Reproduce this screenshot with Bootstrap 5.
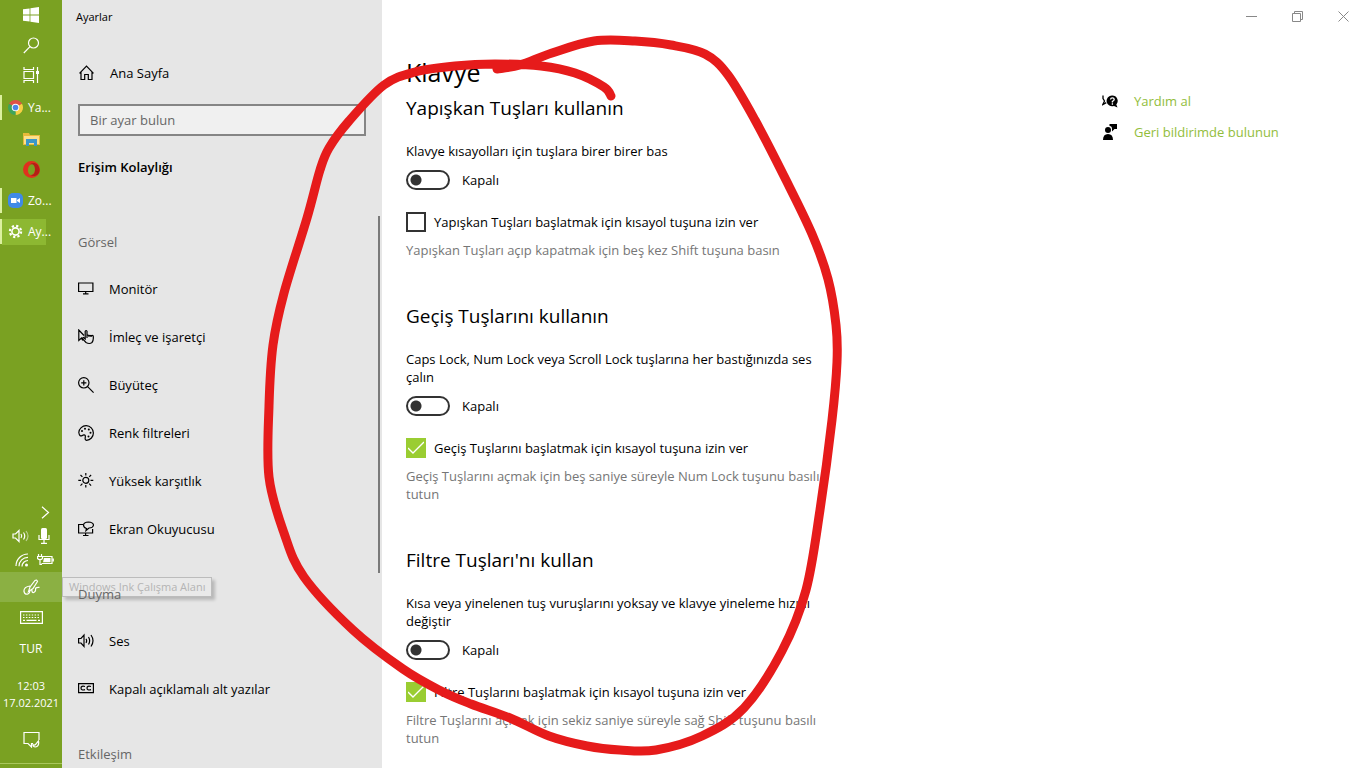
<!DOCTYPE html>
<html lang="tr">
<head>
<meta charset="utf-8">
<meta name="viewport" content="width=device-width, initial-scale=1">
<title>Ayarlar</title>
<link href="https://cdn.jsdelivr.net/npm/bootstrap@5.3.0/dist/css/bootstrap.min.css" rel="stylesheet">
<style>
  body { font-family: "Open Sans", "Noto Sans", sans-serif; font-size: 13px; line-height: 18px; color: #000; background: #fff; }
  button { font: inherit; color: inherit; background: none; border: 0; padding: 0; }
  svg { display: block; flex: none; }
  .line-art { fill: none; stroke: currentColor; stroke-width: 1.2; }

  .taskbar { width: 62px; background: #7aa122; color: #fff; font-size: 12px; line-height: 17px; }
  .tb-pin { height: 30px; }
  .tb-apps { margin-top: 2px; }
  .tb-app { height: 31px; gap: 5px; }
  .tb-app.running { padding-left: 6px; border-left: 2px solid transparent; border-image: linear-gradient(transparent 4px, #dcf0a0 4px, #dcf0a0 27px, transparent 27px) 1; }
  .tb-app.current { background: linear-gradient(#8db832, #8db832) 0 3px / 44px 26px no-repeat; }
  .tray-row { height: 24px; gap: 8px; padding-right: 8px; }
  .tray-btn { height: 30px; }
  .tray-btn.hot { background: #8bb043; }
  .tray-lang { height: 32px; }
  .tray-clock { margin: 13px 0; font-size: 11px; }
  .tray-edge { border-bottom: 1px solid #a9c75c; height: 10px; margin-bottom: 4px; }
  .ink-tip { left: 62px; top: 5px; padding: 0 6px; font-size: 11px; line-height: 18px; color: #b4b4b4; background: #e9e9e9; border: 1px solid #bcbcbc; box-shadow: 3px 3px 3px #0003; z-index: 1; }

  .sidebar { width: 320px; background: #e6e6e6; }
  .app-name { height: 34px; padding-left: 14px; font-size: 11px; }
  .side-link { height: 48px; padding-left: 16px; gap: 15px; color: #000; text-decoration: none; }
  .side-home { margin-top: 15px; }
  .side-search { margin: 7px 16px 0; }
  .side-search .form-control { height: 32px; border: 2px solid #858585; border-radius: 0; background: #f0f0f0; font-size: 13px; padding: 0 10px; }
  .side-search .form-control::placeholder { color: #666; }
  .side-title { font-size: 13px; font-weight: 600; line-height: 22px; padding: 20px 16px 23px; }
  .side-group { font-size: 13px; line-height: 18px; padding: 32px 16px 14px; color: #666; position: relative; z-index: 2; }
  .side-thumb { right: 2px; top: 15px; width: 2px; height: 357px; background: #7a7a7a; }

  .win-btn { width: 46px; height: 32px; color: #888; }
  .pane { padding: 24px 0 0 24px; }
  .options { width: 424px; }
  .page-title { font-size: 25px; line-height: 32px; font-weight: 400; margin-bottom: 6px; }
  .opt-title { font-size: 19px; line-height: 28px; font-weight: 400; margin-bottom: 20px; }
  .opt-switch { gap: 12px; margin: 10px 0 22px; }
  .opt-check { gap: 8px; margin-bottom: 9px; }
  .opt-hint { color: #767676; margin-bottom: 43px; }
  .options .form-check-input { margin: 0; flex: none; border: 2px solid #333; border-radius: 0; width: 20px; height: 20px; background-color: #fff; }
  .options .form-check-input:checked { border-color: #9acd32; background-color: #9acd32; background-size: 20px 20px;
    background-image: url("data:image/svg+xml,%3Csvg xmlns='http://www.w3.org/2000/svg' viewBox='0 0 20 20'%3E%3Cpath d='M2 10l5 5L18 4' fill='none' stroke='%23fff' stroke-width='1.4'/%3E%3C/svg%3E"); background-position: center; background-origin: border-box; }
  .options .switch-input { width: 44px; border-radius: 10px; background-image: radial-gradient(circle at 8px 8px, #333 5px, transparent 6px); background-size: auto; }
  .help { width: 264px; padding-top: 29px; }
  .help a { height: 31px; gap: 16px; color: #92bd3c; text-decoration: none; }
  .help svg { color: #000; }
  .ink-layer { pointer-events: none; z-index: 5; }
</style>
</head>
<body class="position-relative overflow-hidden">
<div class="d-flex vh-100 overflow-hidden">

  <aside class="taskbar d-flex flex-column flex-shrink-0">
    <button class="tb-pin d-flex align-items-center justify-content-center" aria-label="Başlat">
      <svg width="16" height="16" viewBox="0 0 16 16" fill="#fff"><path d="M0 2.3l6.6-.9v6.2H0zM7.4 1.3L16 0v7.6H7.4zM0 8.4h6.6v6.2L0 13.7zM7.4 8.4H16V16l-8.6-1.2z"/></svg>
    </button>
    <button class="tb-pin d-flex align-items-center justify-content-center" aria-label="Ara">
      <svg class="line-art" width="17" height="17" viewBox="0 0 17 17"><circle cx="10.5" cy="6" r="5"/><path d="M7 9.700L.8 16"/></svg>
    </button>
    <button class="tb-pin d-flex align-items-center justify-content-center" aria-label="Görev görünümü">
      <svg class="line-art" width="17" height="16" viewBox="0 0 17 16"><path d="M1 0v2.500h9.500V0M1 16v-2.500h9.500V16M1 4.500h9.500v7H1zM14.500 0v16"/><path d="M13 4h3v3h-3z" fill="#fff" stroke="none"/></svg>
    </button>
    <div class="tb-apps d-flex flex-column">
    <button class="tb-app running d-flex align-items-center">
      <svg width="15" height="15" viewBox="0 0 16 16"><path d="M8 8L1.100 4A8 8 0 0 1 14.900 4z" fill="#de5246"/><path d="M8 8H8L14.900 4A8 8 0 0 1 8 16z" fill="#f8cf45"/><path d="M8 8v8A8 8 0 0 1 1.100 4z" fill="#3fa45b"/><circle cx="8" cy="8" r="4" fill="#fff"/><circle cx="8" cy="8" r="3" fill="#4c86e8"/></svg>
      <span>Ya...</span>
    </button>
    <button class="tb-app d-flex align-items-center justify-content-center" aria-label="Dosya Gezgini">
      <svg width="17" height="14" viewBox="0 0 17 14"><path d="M0 1h6l1 2h10v10H0z" fill="#e8b93b"/><path d="M1 4h15v8H1z" fill="#fbe08c"/><path d="M3 7h11v7h-3v-3H6v3H3z" fill="#3c97c8"/></svg>
    </button>
    <button class="tb-app d-flex align-items-center justify-content-center" aria-label="Opera">
      <svg width="17" height="17" viewBox="0 0 17 17"><path fill-rule="evenodd" d="M8.500 0a8.500 8.500 0 1 1 0 17 8.500 8.500 0 0 1 0-17zm1 3C7 3 5.200 5.500 5 8.500S6 14 8 14s4-2.500 4-5.500S11.500 3 9.500 3z" fill="#e0301e"/><path d="M7 3.300C11 0 16 3 16.500 8.500S11 17 7 13.700c4 1 5-2 5-5.200S11 2.500 7 3.300z" fill="#b32016"/></svg>
    </button>
    <button class="tb-app running d-flex align-items-center">
      <svg width="15" height="15" viewBox="0 0 15 15"><rect width="15" height="15" rx="5" fill="#3f8ae8"/><path d="M3 5h5.500v5H3zM9 7l3-2v5L9 8z" fill="#fff"/></svg>
      <span>Zo...</span>
    </button>
    <button class="tb-app running current d-flex align-items-center">
      <svg width="15" height="15" viewBox="0 0 15 15" fill="none" stroke="#fff"><circle cx="7.500" cy="7.500" r="3.600" stroke-width="1.600"/><circle cx="7.500" cy="7.500" r="5.600" stroke-width="2.200" stroke-dasharray="2.200 2.198"/></svg>
      <span>Ay...</span>
    </button>
    </div>

    <div class="mt-auto">
      <div class="tray-row d-flex align-items-center justify-content-end">
        <button aria-label="Gizli simgeler"><svg class="line-art me-1" width="9" height="13" viewBox="0 0 9 13"><path d="M1 .8l6.500 5.700L1 12.200"/></svg></button>
      </div>
      <div class="tray-row d-flex align-items-center justify-content-end">
        <svg class="line-art" width="18" height="14" viewBox="0 0 18 14"><path d="M1 5h2.500L7 1.500v11L3.500 9H1zM9 5q1.500 2 0 4M11.500 3.500q2.500 3.500 0 7"/><path d="M14 2q4 5 0 10" opacity=".5"/></svg>
        <svg class="me-1" width="12" height="16" viewBox="0 0 12 16"><rect x="3" width="6" height="11" rx="1.500" fill="#fff"/><path class="line-art" d="M1 7v4.500h10V7M6 11.500V15M3 15.300h6"/></svg>
      </div>
      <div class="tray-row d-flex align-items-center justify-content-end">
        <svg class="line-art" width="14" height="14" viewBox="0 0 14 14"><path d="M1 13A12 12 0 0 1 13 1M4 13.300A9 9 0 0 1 13 4.300M7 13.500A6 6 0 0 1 13 7.500"/><circle cx="11.500" cy="12" r="1.500" fill="#fff" stroke="none"/></svg>
        <svg class="line-art" width="17" height="12" viewBox="0 0 17 12"><path d="M5.500 2.500H15v7H4.500M16.300 4.500v3M1.500 0v2.500M4.500 0v2.500M.5 2.500h5v2q-2.500 2.500-5 0zM3 5.500v5h2"/><path d="M7 4h6.500v4.200H6z" fill="#fff" stroke="none"/></svg>
      </div>
      <div class="position-relative">
        <button class="tray-btn hot w-100 d-flex align-items-center justify-content-center" aria-label="Windows Ink" aria-describedby="inkTip">
          <svg class="line-art" width="17" height="17" viewBox="0 0 17 17"><path d="M5.500 12.500L7 8l5-6.500q1.800-1.300 2.500 1L10 9.500zM7 7Q.5 8 1 12.500q.8 3.500 4 2.500 2-1 2-3.500M9 10q-.5 4 1.800 3.500 2.200-1 1.700-3.500 0-1.700 3-1.700h1"/></svg>
        </button>
        <div id="inkTip" role="tooltip" class="ink-tip position-absolute text-nowrap">Windows Ink Çalışma Alanı</div>
      </div>
      <button class="tray-btn w-100 d-flex align-items-center justify-content-center" aria-label="Dokunmatik klavye">
        <svg class="line-art" width="23" height="13" viewBox="0 0 23 13"><path d="M.6.6h21.800v11.800H.6z"/><path d="M3 4h17M3 6.500h17" stroke-dasharray="1.500 1.400"/><path d="M3 9.300h2M6.500 9.300h10M18 9.300h2"/></svg>
      </button>
      <button class="tray-lang w-100">TUR</button>
      <div class="tray-clock text-center text-nowrap">12:03<br>17.02.2021</div>
      <button class="tray-btn w-100 d-flex align-items-center justify-content-center" aria-label="Bildirimler">
        <svg class="line-art" width="17" height="17" viewBox="0 0 17 17"><path d="M16 9V1.500H1v11h4l3.500 3.500v-3.500H10"/><path d="M15.500 10q1 5-3 6-3-.5-2.500-2.500 1 1.500 3-.500 1.500-2 2.500-3z"/></svg>
      </button>
      <div class="tray-edge"></div>
    </div>
  </aside>

  <nav class="sidebar flex-shrink-0 overflow-hidden">
    <div class="app-name d-flex align-items-center">Ayarlar</div>
    <a href="#" class="side-link side-home d-flex align-items-center">
      <svg class="line-art" width="17" height="16" viewBox="0 0 17 16"><path d="M1.500 8.300L8.500 1l7 7.300M3 7v7.500h3.700V9.500h3.600v5H14V7"/></svg><span>Ana Sayfa</span>
    </a>
    <div class="side-search"><input class="form-control" type="search" placeholder="Bir ayar bulun" aria-label="Bir ayar bulun"></div>
    <h1 class="side-title m-0">Erişim Kolaylığı</h1>
    <div class="position-relative">
      <h2 class="side-group m-0">Görsel</h2>
      <a href="#" class="side-link d-flex align-items-center">
        <svg class="line-art" width="16" height="16" viewBox="0 0 16 16"><path d="M.6 2h14.300v8.500H.6zM7.700 10.500v2.300M5 12.800h5.500"/></svg><span>Monitör</span></a>
      <a href="#" class="side-link d-flex align-items-center">
        <svg class="line-art" width="16" height="16" viewBox="0 0 16 16"><path d="M6 6.500L.8 1v10.500L3.500 9l1.200 2.500M9 9V2.200q-.9-1.400-1.800 0V10L5.500 8.500q-1.300.3-.8 1.500L8 13.500q3.500 2 6 0 1.800-2 1.200-6.500-1-1.200-2 0M9 6.500q1-.9 2 .2V8M11 6.800q1-.9 2 .2V8"/></svg><span>İmleç ve işaretçi</span></a>
      <a href="#" class="side-link d-flex align-items-center">
        <svg class="line-art" width="16" height="16" viewBox="0 0 16 16"><circle cx="5.800" cy="5.800" r="5.200"/><path d="M9.600 9.600l6 6M3.200 5.800h5.200M5.800 3.200v5.200"/></svg><span>Büyüteç</span></a>
      <a href="#" class="side-link d-flex align-items-center">
        <svg class="line-art" width="16" height="16" viewBox="0 0 16 16"><path d="M.8 7.500A7.300 7.300 0 1 1 8.500 15.300q-1.700-.3-1.300-2.500.6-3-1.200-3-1 0-1.800.8Q1.500 12 .8 7.500z"/><g fill="currentColor" stroke="none"><circle cx="4" cy="6" r="1"/><circle cx="7" cy="3.800" r="1"/><circle cx="10.800" cy="4.500" r="1"/><circle cx="12.500" cy="7.800" r="1"/><circle cx="10.500" cy="11.500" r="1"/></g></svg><span>Renk filtreleri</span></a>
      <a href="#" class="side-link d-flex align-items-center">
        <svg class="line-art" width="16" height="16" viewBox="0 0 16 16"><circle cx="7.800" cy="7.300" r="3"/><path d="M7.800 0v2.600M7.800 12v2.600M.3 7.300h2.800M12.500 7.300h2.800M2.500 2l1.900 1.900M11.200 10.700l1.900 1.900M13.100 2l-1.900 1.900M4.400 10.700l-1.900 1.900"/></svg><span>Yüksek karşıtlık</span></a>
      <a href="#" class="side-link d-flex align-items-center">
        <svg class="line-art" width="16" height="16" viewBox="0 0 16 16"><path d="M5 3.500H.6v8.500h14V8M7.600 12v2.500M5 14.500h5.500"/><path d="M8.500 7.500Q5.500 6.500 5.500 4q.3-2.800 5-3 4.500.2 5 3-.5 3-4.500 3l-3 2.500z"/></svg><span>Ekran Okuyucusu</span></a>
      <h2 class="side-group m-0">Duyma</h2>
      <a href="#" class="side-link d-flex align-items-center">
        <svg class="line-art" width="16" height="16" viewBox="0 0 16 16"><path d="M.6 5.500H3l3-3.500v11.500L3 10H.6zM8 5.800q1.300 2 0 4M10.500 4q2.300 3.800 0 7.500M13 2q4 5.700 0 11.500"/></svg><span>Ses</span></a>
      <a href="#" class="side-link d-flex align-items-center">
        <svg class="line-art" width="16" height="16" viewBox="0 0 16 16"><path d="M.6 2.600h14.800v9H.6zM7 5.500q-4-1-4 1.600T7 8.700M13 5.500q-4-1-4 1.600t4 1.600"/></svg><span>Kapalı açıklamalı alt yazılar</span></a>
      <h2 class="side-group m-0">Etkileşim</h2>
      <div class="side-thumb position-absolute"></div>
    </div>
  </nav>

  <main class="flex-grow-1 d-flex flex-column">
    <div class="d-flex justify-content-end">
      <button class="win-btn d-flex align-items-center justify-content-center" aria-label="Simge durumuna küçült"><svg width="11" height="11" viewBox="0 0 11 11" fill="none" stroke="currentColor"><path d="M0 5.500h11"/></svg></button>
      <button class="win-btn d-flex align-items-center justify-content-center" aria-label="Geri yükle"><svg width="11" height="11" viewBox="0 0 11 11" fill="none" stroke="currentColor"><path d="M.5 2.500h8v8h-8zM2.500 2.500v-2h8v8h-2"/></svg></button>
      <button class="win-btn d-flex align-items-center justify-content-center" aria-label="Kapat"><svg width="11" height="11" viewBox="0 0 11 11" fill="none" stroke="currentColor"><path d="M.5.5l10 10M10.500.5l-10 10"/></svg></button>
    </div>
    <div class="pane d-flex">
      <div class="options">
        <h1 class="page-title">Klavye</h1>

        <section>
          <h2 class="opt-title">Yapışkan Tuşları kullanın</h2>
          <p class="m-0" id="d1">Klavye kısayolları için tuşlara birer birer bas</p>
          <div class="opt-switch d-flex align-items-center"><input class="form-check-input switch-input" type="checkbox" role="switch" id="s1" aria-describedby="d1"><label for="s1">Kapalı</label></div>
          <div class="opt-check d-flex align-items-center"><input class="form-check-input" type="checkbox" id="c1"><label for="c1">Yapışkan Tuşları başlatmak için kısayol tuşuna izin ver</label></div>
          <p class="opt-hint">Yapışkan Tuşları açıp kapatmak için beş kez Shift tuşuna basın</p>
        </section>

        <section>
          <h2 class="opt-title">Geçiş Tuşlarını kullanın</h2>
          <p class="m-0" id="d2">Caps Lock, Num Lock veya Scroll Lock tuşlarına her bastığınızda ses çalın</p>
          <div class="opt-switch d-flex align-items-center"><input class="form-check-input switch-input" type="checkbox" role="switch" id="s2" aria-describedby="d2"><label for="s2">Kapalı</label></div>
          <div class="opt-check d-flex align-items-center"><input class="form-check-input" type="checkbox" id="c2" checked><label for="c2">Geçiş Tuşlarını başlatmak için kısayol tuşuna izin ver</label></div>
          <p class="opt-hint">Geçiş Tuşlarını açmak için beş saniye süreyle Num Lock tuşunu basılı tutun</p>
        </section>

        <section>
          <h2 class="opt-title">Filtre Tuşları'nı kullan</h2>
          <p class="m-0" id="d3">Kısa veya yinelenen tuş vuruşlarını yoksay ve klavye yineleme hızını değiştir</p>
          <div class="opt-switch d-flex align-items-center"><input class="form-check-input switch-input" type="checkbox" role="switch" id="s3" aria-describedby="d3"><label for="s3">Kapalı</label></div>
          <div class="opt-check d-flex align-items-center"><input class="form-check-input" type="checkbox" id="c3" checked><label for="c3">Filtre Tuşlarını başlatmak için kısayol tuşuna izin ver</label></div>
          <p class="opt-hint">Filtre Tuşlarını açmak için sekiz saniye süreyle sağ Shift tuşunu basılı tutun</p>
        </section>
      </div>

      <div class="help ms-auto flex-shrink-0">
        <a href="#" class="d-flex align-items-center">
          <svg width="16" height="16" viewBox="0 0 16 16"><path d="M1 2.500v3l1.500 2.500L.8 11.500l3.500-1.800" fill="none" stroke="#000" stroke-width="1.300"/><path d="M10.300 2.500a5.400 5.400 0 0 1 4 9l1.200 3-3.500-1.600a5.400 5.400 0 1 1-1.700-10.400z"/><path d="M8.500 6.500q.2-1.600 1.900-1.600t1.800 1.500q0 1-1.800 2v1M10.400 10.300v1.400" stroke="#fff" stroke-width="1.300" fill="none"/></svg>
          <span>Yardım al</span></a>
        <a href="#" class="d-flex align-items-center">
          <svg width="16" height="16" viewBox="0 0 16 16"><circle cx="6" cy="6" r="3"/><path d="M1 16q0-6 5-6t5 6zM7.500 0H15v5h-2.500L10 7.500V5q0-3-2.500-3z"/></svg>
          <span>Geri bildirimde bulunun</span></a>
      </div>
    </div>
  </main>
</div>

<svg class="ink-layer position-absolute top-0 start-0" width="860" height="768" viewBox="0 0 860 768" aria-hidden="true">
  <path id="inkStroke" fill="none" stroke="#e61b1b" stroke-width="9" stroke-linecap="round" stroke-linejoin="round"/>
</svg>

<script src="https://cdn.jsdelivr.net/npm/bootstrap@5.3.0/dist/js/bootstrap.bundle.min.js"></script>
<script>
  // Freehand pen stroke: sampled points joined by a Catmull-Rom spline.
  const pts = [[497,69],[520,65],[552,53],[594,41],[635,41],[671,45],[705,54],[728,75],[755,120],[786,180],[812,234],[828,279],[836,325],[837,362],[832,420],[820,510],[806,590],[782,651],[744,708],[702,736],[656,750],[620,750],[587,746],[549,736],[510,718],[471,704],[441,691],[403,669],[353,630],[304,577],[284,533],[269,477],[269,406],[273,345],[284,293],[307,218],[320,170],[329,148],[349,121],[384,85],[415,72],[455,66],[495,64],[541,66],[575,73],[604,87],[611,96]];
  let d = 'M' + pts[0];
  for (let i = 0; i < pts.length - 1; i++) {
    const a = pts[i - 1] || pts[i], b = pts[i], c = pts[i + 1], e = pts[i + 2] || c;
    d += ` C${b[0] + (c[0] - a[0]) / 6},${b[1] + (c[1] - a[1]) / 6} ${c[0] - (e[0] - b[0]) / 6},${c[1] - (e[1] - b[1]) / 6} ${c}`;
  }
  document.getElementById('inkStroke').setAttribute('d', d);
</script>
</body>
</html>
